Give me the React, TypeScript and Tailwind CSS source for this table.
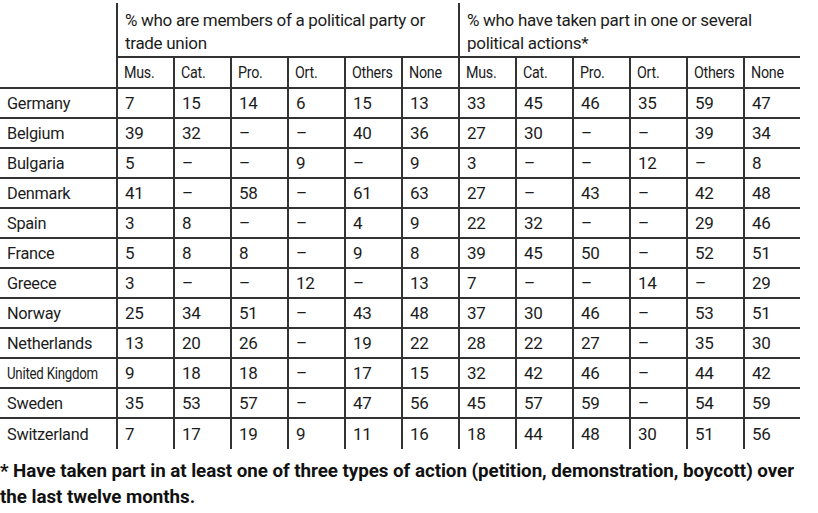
import React from "react";

const cols = ["Mus.", "Cat.", "Pro.", "Ort.", "Others", "None"];

const rows: [string, string[]][] = [
  ["Germany", ["7", "15", "14", "6", "15", "13", "33", "45", "46", "35", "59", "47"]],
  ["Belgium", ["39", "32", "–", "–", "40", "36", "27", "30", "–", "–", "39", "34"]],
  ["Bulgaria", ["5", "–", "–", "9", "–", "9", "3", "–", "–", "12", "–", "8"]],
  ["Denmark", ["41", "–", "58", "–", "61", "63", "27", "–", "43", "–", "42", "48"]],
  ["Spain", ["3", "8", "–", "–", "4", "9", "22", "32", "–", "–", "29", "46"]],
  ["France", ["5", "8", "8", "–", "9", "8", "39", "45", "50", "–", "52", "51"]],
  ["Greece", ["3", "–", "–", "12", "–", "13", "7", "–", "–", "14", "–", "29"]],
  ["Norway", ["25", "34", "51", "–", "43", "48", "37", "30", "46", "–", "53", "51"]],
  ["Netherlands", ["13", "20", "26", "–", "19", "22", "28", "22", "27", "–", "35", "30"]],
  ["United Kingdom", ["9", "18", "18", "–", "17", "15", "32", "42", "46", "–", "44", "42"]],
  ["Sweden", ["35", "53", "57", "–", "47", "56", "45", "57", "59", "–", "54", "59"]],
  ["Switzerland", ["7", "17", "19", "9", "11", "16", "18", "44", "48", "30", "51", "56"]],
];

const font = { fontFamily: "Roboto, 'Noto Sans', sans-serif" };

export default function App() {
  return (
    <div className="w-[818px] h-[513px] bg-white text-[#1c1c1c] pt-[3px]" style={font}>
      <div className="w-[801px] grid grid-cols-[116px_repeat(12,57px)] text-[17px] leading-none tracking-[-0.3px]">
        {/* group header */}
        <div className="h-[55px]" />
        <div className="col-span-6 border-l-2 border-b-2 border-[#333] pl-[7px] pt-[6px] leading-[23px]">
          % who are members of a political party or trade union
        </div>
        <div className="col-span-6 border-l-2 border-b-2 border-[#333] pl-[7px] pt-[6px] leading-[23px]">
          % who have taken part in one or several political actions*
        </div>
        {/* sub header */}
        <div className="h-[31px] border-b-2 border-[#333]" />
        {[...cols, ...cols].map((c, i) => (
          <div key={i} className="h-[31px] border-l-2 border-b-2 border-[#333] pl-[6px] flex items-center">
            <span className="inline-block origin-left scale-x-[0.84] whitespace-nowrap">{c}</span>
          </div>
        ))}
        {rows.map(([name, vals], r) => {
          const last = r === rows.length - 1;
          const b = last ? "h-[30px]" : "h-[30px] border-b-2 border-[#333]";
          return (
            <React.Fragment key={name}>
              <div className={`${b} pl-[7px] flex items-center`}>
                <span
                  className={`inline-block origin-left whitespace-nowrap ${
                    name === "United Kingdom" ? "scale-x-[0.78]" : "scale-x-[0.96]"
                  }`}
                >
                  {name}
                </span>
              </div>
              {vals.map((v, i) => (
                <div key={i} className={`${b} border-l-2 border-[#333] pl-[7px] flex items-center`}>
                  {v}
                </div>
              ))}
            </React.Fragment>
          );
        })}
      </div>
      <div className="mt-[9px] text-[18.8px] font-bold leading-[26px] tracking-[-0.05px] w-[812px] text-[#111]">
        * Have taken part in at least one of three types of action (petition, demonstration, boycott) over the last twelve months.
      </div>
    </div>
  );
}
